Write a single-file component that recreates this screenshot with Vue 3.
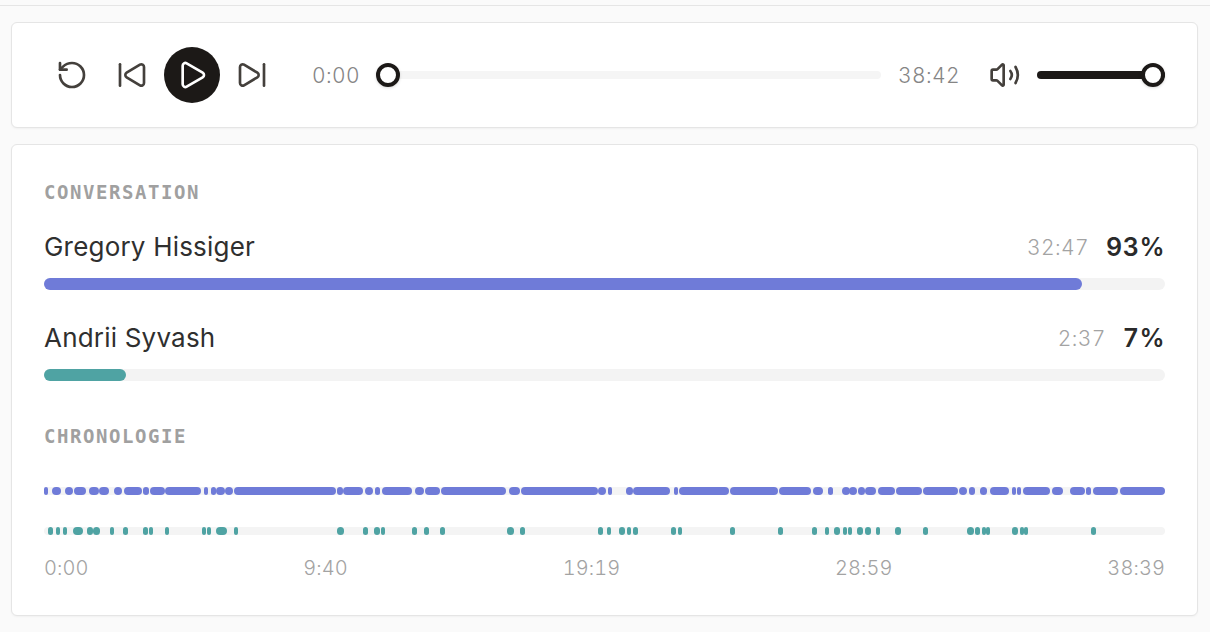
<template>
  <div class="page">
    <div class="topbar"></div>
    <main class="content">
      <section class="card player">
        <button class="icon-btn restart" aria-label="Restart">
          <svg viewBox="0 0 24 24"><path d="M3 12a9 9 0 1 0 9-9 9.75 9.75 0 0 0-6.74 2.74L3 8" /><path d="M3 3v5h5" /></svg>
        </button>
        <button class="icon-btn" aria-label="Previous">
          <svg viewBox="0 0 24 24"><path d="M17.971 4.285A2 2 0 0 1 21 6v12a2 2 0 0 1-3.029 1.715l-9.997-5.998a2 2 0 0 1-.003-3.432z" /><path d="M3 20V4" /></svg>
        </button>
        <button class="icon-btn play" aria-label="Play">
          <svg viewBox="0 0 24 24"><path d="M5 5a2 2 0 0 1 3.008-1.728l11.997 6.998a2 2 0 0 1 .003 3.458l-12 7A2 2 0 0 1 5 19z" /></svg>
        </button>
        <button class="icon-btn" aria-label="Next">
          <svg viewBox="0 0 24 24"><path d="M21 4v16" /><path d="M6.029 4.285A2 2 0 0 0 3 6v12a2 2 0 0 0 3.029 1.715l9.997-5.998a2 2 0 0 0 .003-3.432z" /></svg>
        </button>

        <span class="time current">0:00</span>
        <div class="seek">
          <span class="thumb seek-thumb"></span>
        </div>
        <span class="time total">38:42</span>

        <button class="icon-btn volume-icon" aria-label="Volume">
          <svg viewBox="0 0 24 24">
            <path d="M11 4.702a.705.705 0 0 0-1.203-.498L6.413 7.587A1.4 1.4 0 0 1 5.416 8H3a1 1 0 0 0-1 1v6a1 1 0 0 0 1 1h2.416a1.4 1.4 0 0 1 .997.413l3.383 3.384A.705.705 0 0 0 11 19.298z" />
            <path d="M16 9a5 5 0 0 1 0 6" />
            <path d="M19.9 6a12 12 0 0 1 0 12" />
          </svg>
        </button>
        <div class="volume">
          <span class="thumb volume-thumb"></span>
        </div>
      </section>

      <section class="card stats">
        <h2 class="label">CONVERSATION</h2>

        <div v-for="s in speakers" :key="s.name" class="speaker">
          <div class="speaker-head">
            <span class="speaker-name">{{ s.name }}</span>
            <span class="speaker-time">{{ s.time }}</span>
            <span class="speaker-pct">{{ s.pct }}</span>
          </div>
          <div class="bar">
            <div class="bar-fill" :class="s.cls" :style="{ width: s.width + 'px' }"></div>
          </div>
        </div>

        <h2 class="label chrono">CHRONOLOGIE</h2>

        <div class="track track-a">
          <span v-for="(seg, i) in blueSegments" :key="i" class="seg seg-a" :style="segStyle(seg)"></span>
        </div>
        <div class="track track-b">
          <span v-for="(seg, i) in tealSegments" :key="i" class="seg seg-b" :style="segStyle(seg)"></span>
        </div>

        <div class="ticks">
          <span v-for="t in ticks" :key="t">{{ t }}</span>
        </div>
      </section>
    </main>
  </div>
</template>

<script setup>
const speakers = [
  { name: 'Gregory Hissiger', time: '32:47', pct: '93%', width: 1038, cls: 'fill-a' },
  { name: 'Andrii Syvash', time: '2:37', pct: '7%', width: 82, cls: 'fill-b' }
]

const ticks = ['0:00', '9:40', '19:19', '28:59', '38:39']

// start / end of each turn, in px from the left of the card
const TRACK_LEFT = 44

const blueSegments = [
  [44, 48], [52, 61], [65, 73], [74, 86], [89, 99], [99, 109], [114, 122], [124, 142], [143, 149],
  [150, 165], [165, 201], [204, 208], [211, 216], [216, 225], [225, 233], [234, 336], [337, 343],
  [343, 363], [365, 373], [375, 380], [382, 412], [415, 424], [425, 440], [441, 506], [509, 520],
  [521, 598], [598, 606], [608, 612], [626, 633], [633, 670], [674, 678], [679, 729], [730, 778],
  [779, 811], [813, 823], [828, 833], [842, 850], [849, 857], [858, 865], [865, 876], [878, 895],
  [896, 922], [923, 958], [959, 967], [969, 975], [980, 987], [990, 1009], [1012, 1016], [1017, 1021],
  [1023, 1050], [1052, 1063], [1070, 1085], [1086, 1091], [1093, 1118], [1120, 1165]
]

const tealSegments = [
  [48, 53], [56, 60], [63, 67], [73, 83], [87, 93], [93, 100], [110, 114], [123, 128], [143, 148],
  [149, 153], [165, 169], [202, 206], [207, 211], [216, 227], [234, 238], [337, 344], [363, 368],
  [374, 380], [381, 385], [412, 417], [424, 429], [440, 445], [507, 514], [520, 525], [598, 603],
  [607, 611], [619, 625], [627, 631], [633, 638], [671, 676], [678, 682], [730, 735], [778, 783],
  [812, 817], [825, 829], [834, 840], [843, 847], [848, 852], [857, 863], [865, 871], [876, 880],
  [895, 901], [923, 928], [967, 974], [975, 980], [982, 986], [986, 990], [1012, 1018], [1020, 1024],
  [1024, 1028], [1091, 1096]
]

const segStyle = ([start, end]) => ({
  left: start - TRACK_LEFT + 'px',
  width: end - start + 'px'
})
</script>

<style>
html,
body {
  background: #fafafa;
}
</style>

<style scoped>
.page {
  height: 632px;
  overflow: hidden;
  background: #fafafa;
  font-family: Inter, "Liberation Sans", sans-serif;
}

.topbar {
  height: 5px;
  border-bottom: 1px solid #e5e5e5;
}

.content {
  display: flex;
  flex-direction: column;
  gap: 16px;
  padding: 16px 12px 0 11px;
}

.card {
  background: #fff;
  border: 1px solid #e5e5e5;
  border-radius: 6px;
  box-shadow: 0 1px 2px rgba(0, 0, 0, 0.04);
}

/* Player */
.player {
  display: flex;
  align-items: center;
  height: 106px;
  box-sizing: border-box;
  padding: 0 32px 0 42px;
}

.icon-btn {
  display: flex;
  align-items: center;
  justify-content: center;
  flex: none;
  width: 36px;
  height: 36px;
  padding: 0;
  border: 0;
  background: none;
  color: #44403c;
}

.icon-btn svg {
  width: 32px;
  height: 32px;
  fill: none;
  stroke: currentColor;
  stroke-width: 2;
  stroke-linecap: round;
  stroke-linejoin: round;
}

.restart {
  margin-right: 24px;
}

.play {
  width: 56px;
  height: 56px;
  margin: 0 14px;
  border-radius: 50%;
  background: #1c1917;
  color: #fff;
}

.time {
  flex: none;
  width: 47px;
  font-size: 21px;
  font-weight: 350;
  font-variant-numeric: tabular-nums;
  letter-spacing: 0.4px;
  white-space: nowrap;
  color: #858585;
}

.current {
  margin-left: 42px;
}

.seek {
  position: relative;
  flex: none;
  width: 493px;
  height: 8px;
  margin-left: 29px;
  background: #f5f5f5;
  border-radius: 0 4px 4px 0;
}

.total {
  width: 61px;
  margin-left: 17px;
}

.thumb {
  position: absolute;
  top: 50%;
  width: 24px;
  height: 24px;
  box-sizing: border-box;
  border: 4px solid #1c1917;
  border-radius: 50%;
  background: #fff;
  box-shadow: 0 1px 3px rgba(0, 0, 0, 0.15);
  transform: translate(-50%, -50%);
}

.seek-thumb {
  left: 0;
}

.volume-icon {
  margin-left: 28px;
}

.volume {
  position: relative;
  flex: none;
  width: 128px;
  height: 8px;
  margin-left: 14px;
  background: #1c1917;
  border-radius: 4px;
}

.volume-thumb {
  left: 116px;
}

/* Stats */
.stats {
  height: 472px;
  box-sizing: border-box;
  padding: 35px 32px 0;
}

.label {
  margin: 0;
  font-family: "DejaVu Sans Mono", monospace;
  font-size: 19px;
  line-height: 24px;
  font-weight: 700;
  letter-spacing: 1.56px;
  color: #a0a0a0;
}

.speaker {
  margin-bottom: 32px;
}

.label + .speaker {
  margin-top: 27px;
}

.speaker-head {
  display: flex;
  align-items: center;
  height: 32px;
  margin-bottom: 15px;
}

.speaker-name {
  flex: 1;
  margin-top: -2px;
  font-size: 26px;
  letter-spacing: 0.2px;
  color: #2f2f2f;
}

.speaker-time {
  font-size: 21px;
  font-weight: 350;
  font-variant-numeric: tabular-nums;
  letter-spacing: 0.4px;
  color: #a3a3a3;
}

.speaker-pct {
  margin-left: 17px;
  font-size: 25px;
  font-weight: 600;
  font-variant-numeric: tabular-nums;
  letter-spacing: 0.5px;
  color: #2a2a2a;
}

.bar {
  height: 12px;
  border-radius: 6px;
  background: #f3f3f3;
}

.bar-fill {
  height: 100%;
  border-radius: 6px;
}

.fill-a {
  background: #6f7bd8;
}

.fill-b {
  background: #4fa3a3;
}

.chrono {
  margin-top: 43px;
}

.track {
  position: relative;
  height: 8px;
  border-radius: 4px;
  background: #f4f4f4;
}

.track-a {
  margin-top: 39px;
}

.track-b {
  margin-top: 32px;
}

.seg {
  position: absolute;
  top: 0;
  height: 100%;
  border-radius: 4px;
}

.seg-a {
  background: #6f7bd8;
}

.seg-b {
  background: #4fa3a3;
}

.ticks {
  display: flex;
  justify-content: space-between;
  margin-top: 19px;
  font-size: 20px;
  line-height: 28px;
  font-weight: 350;
  font-variant-numeric: tabular-nums;
  letter-spacing: 0.1px;
  color: #a3a3a3;
}
</style>
